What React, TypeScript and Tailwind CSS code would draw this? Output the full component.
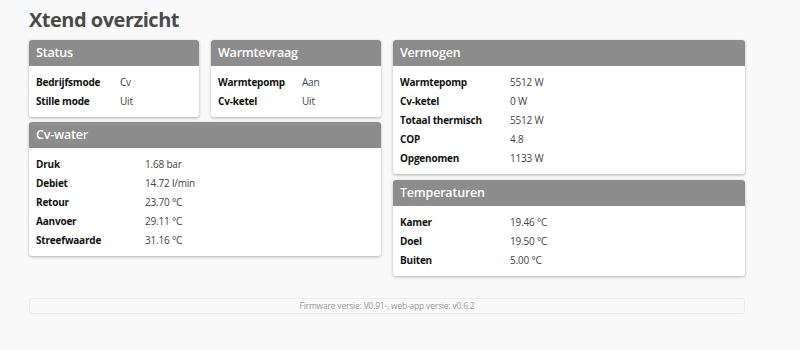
import React from 'react';

type Row = [string, string];

const Card: React.FC<{ title: string; rows: Row[]; labelWidth: string }> = ({ title, rows, labelWidth }) => (
    <div className="rounded-[3px] bg-white shadow-[0_1px_3px_rgba(0,0,0,0.3)] overflow-hidden">
        <div className="h-[26px] bg-[#8c8c8c] px-[7px] flex items-center text-[12.5px] font-semibold tracking-[-0.2px] text-white">{title}</div>
        <div className="px-[7px] pt-[7px] pb-[6px]">
            {rows.map(([label, value]) => (
                <div key={label} className="flex h-[19px] items-center text-[10px] tracking-[-0.2px]">
                    <span className={`${labelWidth} shrink-0 font-bold text-[#111]`}>{label}</span>
                    <span className="text-[#444]">{value}</span>
                </div>
            ))}
        </div>
    </div>
);

export default function App() {
    return (
        <div className="min-h-[350px] bg-[#f9f9f9] px-[29px] pt-[5px] font-['Open_Sans',sans-serif]">
            <h1 className="text-[20px] font-bold leading-[30px] tracking-[-0.5px] text-[#4a4a4a]">Xtend overzicht</h1>
            <div className="mt-[5px] flex gap-[12px]">
                <div className="flex w-[352px] flex-col gap-[5px]">
                    <div className="flex gap-[12px]">
                        <div className="w-[170px]">
                            <Card title="Status" labelWidth="w-[84px]" rows={[['Bedrijfsmode', 'Cv'], ['Stille mode', 'Uit']]} />
                        </div>
                        <div className="w-[170px]">
                            <Card title="Warmtevraag" labelWidth="w-[84px]" rows={[['Warmtepomp', 'Aan'], ['Cv-ketel', 'Uit']]} />
                        </div>
                    </div>
                    <Card
                        title="Cv-water"
                        labelWidth="w-[109px]"
                        rows={[
                            ['Druk', '1.68 bar'],
                            ['Debiet', '14.72 l/min'],
                            ['Retour', '23.70 °C'],
                            ['Aanvoer', '29.11 °C'],
                            ['Streefwaarde', '31.16 °C'],
                        ]}
                    />
                </div>
                <div className="flex w-[352px] flex-col gap-[6px]">
                    <Card
                        title="Vermogen"
                        labelWidth="w-[110px]"
                        rows={[
                            ['Warmtepomp', '5512 W'],
                            ['Cv-ketel', '0 W'],
                            ['Totaal thermisch', '5512 W'],
                            ['COP', '4.8'],
                            ['Opgenomen', '1133 W'],
                        ]}
                    />
                    <Card
                        title="Temperaturen"
                        labelWidth="w-[110px]"
                        rows={[
                            ['Kamer', '19.46 °C'],
                            ['Doel', '19.50 °C'],
                            ['Buiten', '5.00 °C'],
                        ]}
                    />
                </div>
            </div>
            <div className="mt-[22px] w-[716px] rounded-[3px] border border-[#ececec] h-[16px] flex items-center justify-center text-[8.5px] tracking-[-0.2px] text-[#999]">
                Firmware versie: V0.91-, web-app versie: v0.6.2
            </div>
        </div>
    );
}
